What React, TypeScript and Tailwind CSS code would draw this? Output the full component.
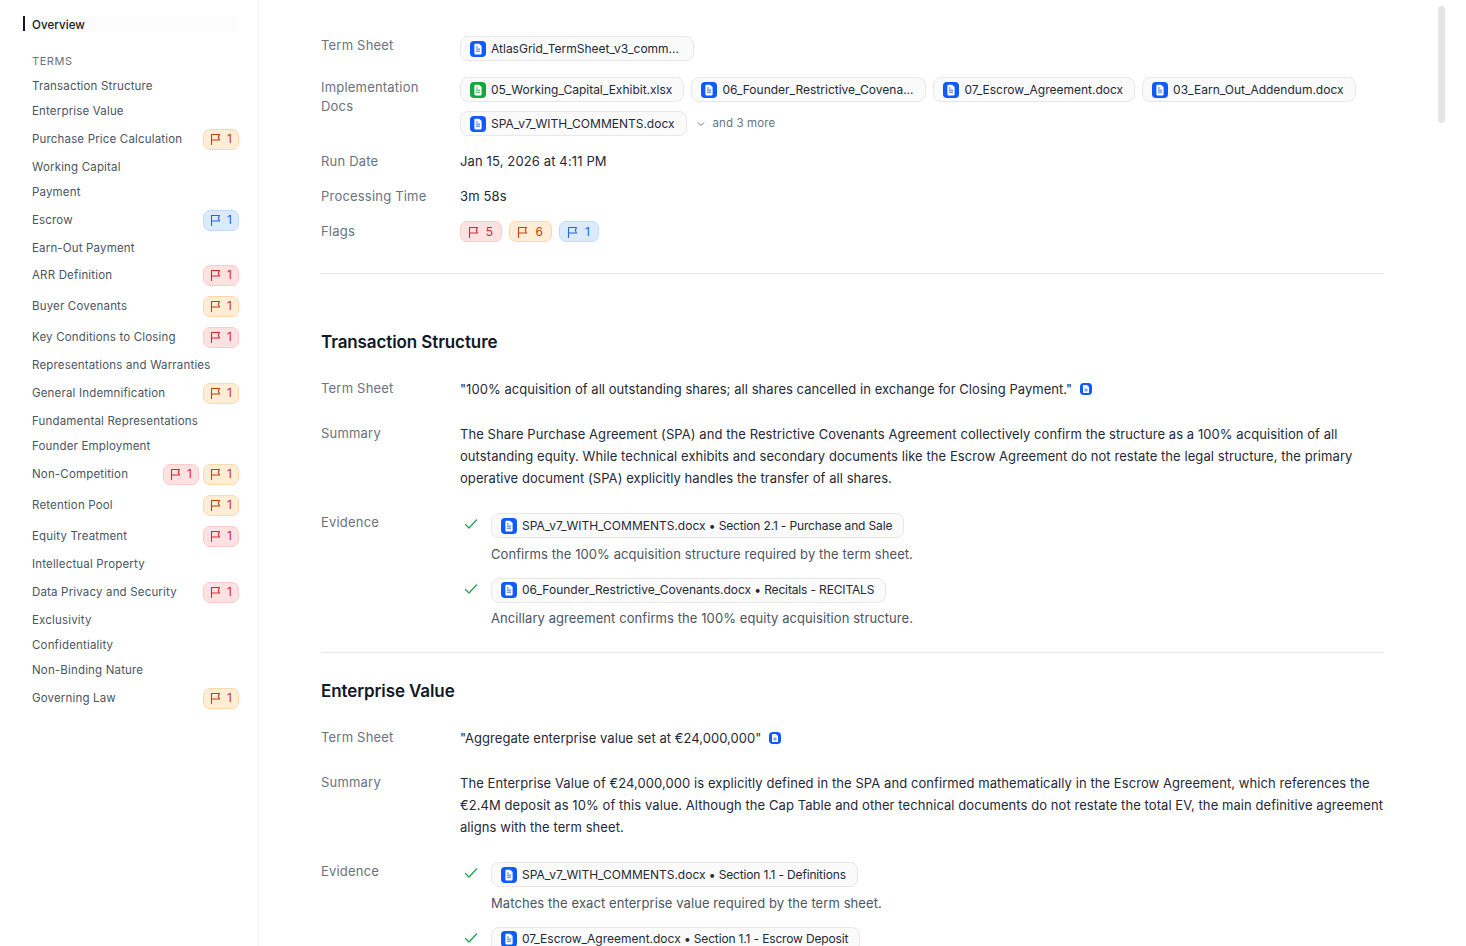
import React from "react";

type Tone = "red" | "orange" | "blue";

const toneClasses: Record<Tone, string> = {
  red: "bg-[#fee2e2] border-[#fecaca] text-[#dc2626]",
  orange: "bg-[#ffedd5] border-[#fed7aa] text-[#c2410c]",
  blue: "bg-[#dbeafe] border-[#bfdbfe] text-[#2563eb]",
};

function FlagIcon() {
  return (
    <svg viewBox="0 0 12 12" className="w-3 h-3" fill="none" stroke="currentColor" strokeWidth="1.1" strokeLinejoin="round" strokeLinecap="round">
      <path d="M2.500 11.500V1.500h8L9.300 4.300 10.500 7H2.500" />
    </svg>
  );
}

function FlagBadge({ tone, n, wide }: { tone: Tone; n: number; wide?: string }) {
  return (
    <span className={`inline-flex items-center justify-between h-[21px] rounded-[7px] border text-xs ${wide ?? "w-9 pl-[5px] pr-[6px]"} ${toneClasses[tone]}`}>
      <FlagIcon />
      <span>{n}</span>
    </span>
  );
}

function DocIcon({ color = "#0f5bff" }: { color?: string }) {
  return (
    <svg viewBox="0 0 16 16" className="w-4 h-4 shrink-0">
      <rect width="16" height="16" rx="4" fill={color} />
      <path d="M4.400 3.500a.8.8 0 0 1 .8-.8h3.900l2.500 2.400v7.500a.8.8 0 0 1-.8.8H5.200a.8.8 0 0 1-.8-.8z" fill="#fff" />
      <path d="M6 6h1.700M6 8.100h4M6 10.200h4" stroke={color} strokeWidth="0.9" />
    </svg>
  );
}

function Chip({ name, rest, color, width }: { name: string; rest?: string; color?: string; width?: string }) {
  return (
    <span className={`inline-flex items-center gap-[5px] h-[25px] pl-[9px] pr-[11px] rounded-lg border border-[#e8e8ea] bg-[#fafafa] text-[12px] leading-4 text-[#1f2937] whitespace-nowrap ${width ?? ""}`}>
      <DocIcon color={color} />
      <span>
        {name}
        {rest && <span className="tracking-[-0.15px]"> • {rest}</span>}
      </span>
    </span>
  );
}

const navItems: { label: string; flags?: { tone: Tone; n: number }[]; tight?: boolean }[] = [
  { label: "Transaction Structure" },
  { label: "Enterprise Value" },
  { label: "Purchase Price Calculation", flags: [{ tone: "orange", n: 1 }] },
  { label: "Working Capital" },
  { label: "Payment" },
  { label: "Escrow", flags: [{ tone: "blue", n: 1 }] },
  { label: "Earn-Out Payment" },
  { label: "ARR Definition", flags: [{ tone: "red", n: 1 }], tight: true },
  { label: "Buyer Covenants", flags: [{ tone: "orange", n: 1 }] },
  { label: "Key Conditions to Closing", flags: [{ tone: "red", n: 1 }] },
  { label: "Representations and Warranties" },
  { label: "General Indemnification", flags: [{ tone: "orange", n: 1 }] },
  { label: "Fundamental Representations" },
  { label: "Founder Employment" },
  { label: "Non-Competition", flags: [{ tone: "red", n: 1 }, { tone: "orange", n: 1 }] },
  { label: "Retention Pool", flags: [{ tone: "orange", n: 1 }] },
  { label: "Equity Treatment", flags: [{ tone: "red", n: 1 }] },
  { label: "Intellectual Property" },
  { label: "Data Privacy and Security", flags: [{ tone: "red", n: 1 }] },
  { label: "Exclusivity" },
  { label: "Confidentiality" },
  { label: "Non-Binding Nature" },
  { label: "Governing Law", flags: [{ tone: "orange", n: 1 }] },
];

function Sidebar() {
  return (
    <aside className="w-[259px] shrink-0 h-full border-r border-[#f6f6f7] pl-[32px] pr-[19px] pt-[16px] overflow-hidden">
      <div className="relative h-4 flex items-center bg-[#fbfcfb] text-[11.5px] font-medium text-[#111827] tracking-[0.1px]">
        <span className="absolute -left-[9px] top-0 w-[2px] h-[15px] bg-[#111827]" />
        <span className="pt-[4px]">Overview</span>
      </div>
      <div className="mt-[21px] h-4 flex items-center text-[11px] text-[#6b7280] tracking-[0.05em]">TERMS</div>
      <div className="mt-[9px] flex flex-col gap-[9px]">
        {navItems.map((it) => (
          <div key={it.label} className={`flex items-center justify-between text-[11.5px] text-[#4b5563] tracking-[0.17px] ${it.flags ? "h-[22px]" : "h-4"} ${it.tight ? "-mt-px" : ""}`}>
            <span className="pt-[2px]">{it.label}</span>
            {it.flags && (
              <span className="flex gap-1">
                {it.flags.map((f, i) => (
                  <FlagBadge key={i} tone={f.tone} n={f.n} />
                ))}
              </span>
            )}
          </div>
        ))}
      </div>
    </aside>
  );
}

function Label({ children, className = "" }: { children: React.ReactNode; className?: string }) {
  return <div className={`w-[139px] shrink-0 text-[13px] leading-5 text-[#6b7280] tracking-[0.2px] ${className}`}>{children}</div>;
}

function Evidence({ doc, rest, note }: { doc: string; rest: string; note: string }) {
  return (
    <div className="flex">
      <svg viewBox="0 0 14 14" className="w-[14px] h-[14px] mt-[4px] ml-[4px] mr-[13px] shrink-0" fill="none" stroke="#16a34a" strokeWidth="1.2" strokeLinecap="round" strokeLinejoin="round">
        <path d="M1.500 7.500 5 11 12.500 3" />
      </svg>
      <div>
        <Chip name={doc} rest={rest} />
        {note && <div className="mt-[4px] text-[13px] leading-5 text-[#4b5563] tracking-[0.08px]">{note}</div>}
      </div>
    </div>
  );
}

function Section({ title, quote, summary, evidence }: { title: string; quote: string; summary: string[]; evidence: { doc: string; rest: string; note: string }[] }) {
  return (
    <section>
      <h2 className="h-7 flex items-center text-[17px] font-semibold text-[#111827] tracking-[-0.1px]">{title}</h2>
      <div className="mt-[22px] flex">
        <Label className="-mt-px">Term Sheet</Label>
        <div className="text-[13px] leading-5 text-[#1f2937] tracking-[0.04px] flex items-center gap-2">
          <span>{quote}</span>
          <svg viewBox="0 0 16 16" className="w-3 h-3">
            <rect width="16" height="16" rx="5" fill="#0f5bff" />
            <path d="M4 3.500a.8.8 0 0 1 .8-.8h4.300l2.900 2.600v7.200a.8.8 0 0 1-.8.8H4.800a.8.8 0 0 1-.8-.8z" fill="#fff" />
            <path d="M6 8.200h4M6 10.400h4" stroke="#0f5bff" strokeWidth="1.100" />
          </svg>
        </div>
      </div>
      <div className="mt-[25px] flex">
        <Label className="-mt-px">Summary</Label>
        <div className="text-[13px] leading-[22px] -mt-[1px] text-[#1f2937] tracking-[0.07px]">
          {summary.map((l) => (
            <div key={l} className="whitespace-nowrap">{l}</div>
          ))}
        </div>
      </div>
      <div className="mt-[23px] flex">
        <Label>Evidence</Label>
        <div className="mt-px flex flex-col gap-[14px]">
          {evidence.map((e) => (
            <Evidence key={e.doc} {...e} />
          ))}
        </div>
      </div>
    </section>
  );
}

export default function App() {
  return (
    <div className="relative h-screen w-full flex overflow-hidden bg-white" style={{ fontFamily: "Inter, 'Liberation Sans', sans-serif" }}>
      <Sidebar />
      <main className="flex-1 min-w-0 h-full overflow-hidden pl-[62px] pr-[82px] pt-[36px]">
        <div className="flex items-start">
          <Label className="-mt-[1px]">Term Sheet</Label>
          <Chip name="AtlasGrid_TermSheet_v3_comm..." width="w-[234px]" />
        </div>
        <div className="mt-[16px] flex items-start">
          <Label className="leading-[19px] pt-px">Implementation<br />Docs</Label>
          <div className="flex flex-wrap gap-x-[7px] gap-y-[9px] items-center">
            <Chip name="05_Working_Capital_Exhibit.xlsx" color="#12a83f" />
            <Chip name="06_Founder_Restrictive_Covena..." width="w-[235px]" />
            <Chip name="07_Escrow_Agreement.docx" />
            <Chip name="03_Earn_Out_Addendum.docx" />
            <Chip name="SPA_v7_WITH_COMMENTS.docx" />
            <span className="flex items-center gap-[6px] ml-[1px] text-[11.5px] text-[#6b7280] tracking-[0.1px]">
              <svg viewBox="0 0 12 12" className="w-3 h-3" fill="none" stroke="#6b7280" strokeWidth="1"><path d="M3 4.500 6 7.500 9 4.500" /></svg>
              and 3 more
            </span>
          </div>
        </div>
        <div className="mt-[15px] flex">
          <Label>Run Date</Label>
          <div className="text-[13px] leading-5 text-[#1f2937] tracking-[0.13px]">Jan 15, 2026 at 4:11 PM</div>
        </div>
        <div className="mt-[15px] flex">
          <Label>Processing Time</Label>
          <div className="text-[13px] leading-5 text-[#1f2937] tracking-[0.13px]">3m 58s</div>
        </div>
        <div className="mt-[15px] flex">
          <Label>Flags</Label>
          <div className="flex gap-[7px]">
            <FlagBadge tone="red" n={5} wide="w-[42px] pl-[6px] pr-[8px]" />
            <FlagBadge tone="orange" n={6} wide="w-[43px] pl-[6px] pr-[8px]" />
            <FlagBadge tone="blue" n={1} wide="w-10 pl-[6px] pr-[8px]" />
          </div>
        </div>
        <hr className="mt-[31px] mb-[55px] border-[#e5e7eb]" />
        <Section
          title="Transaction Structure"
          quote={'"100% acquisition of all outstanding shares; all shares cancelled in exchange for Closing Payment."'}
          summary={[
            "The Share Purchase Agreement (SPA) and the Restrictive Covenants Agreement collectively confirm the structure as a 100% acquisition of all",
            "outstanding equity. While technical exhibits and secondary documents like the Escrow Agreement do not restate the legal structure, the primary",
            "operative document (SPA) explicitly handles the transfer of all shares.",
          ]}
          evidence={[
            { doc: "SPA_v7_WITH_COMMENTS.docx", rest: "Section 2.1 - Purchase and Sale", note: "Confirms the 100% acquisition structure required by the term sheet." },
            { doc: "06_Founder_Restrictive_Covenants.docx", rest: "Recitals - RECITALS", note: "Ancillary agreement confirms the 100% equity acquisition structure." },
          ]}
        />
        <hr className="mt-[24px] mb-[25px] border-[#e5e7eb]" />
        <Section
          title="Enterprise Value"
          quote={'"Aggregate enterprise value set at €24,000,000"'}
          summary={[
            "The Enterprise Value of €24,000,000 is explicitly defined in the SPA and confirmed mathematically in the Escrow Agreement, which references the",
            "€2.4M deposit as 10% of this value. Although the Cap Table and other technical documents do not restate the total EV, the main definitive agreement",
            "aligns with the term sheet.",
          ]}
          evidence={[
            { doc: "SPA_v7_WITH_COMMENTS.docx", rest: "Section 1.1 - Definitions", note: "Matches the exact enterprise value required by the term sheet." },
            { doc: "07_Escrow_Agreement.docx", rest: "Section 1.1 - Escrow Deposit", note: "" },
          ]}
        />
      </main>
      <div className="absolute right-[21px] top-[6px] w-[7px] h-[117px] rounded-full bg-[#e5e5e5]" />
    </div>
  );
}
